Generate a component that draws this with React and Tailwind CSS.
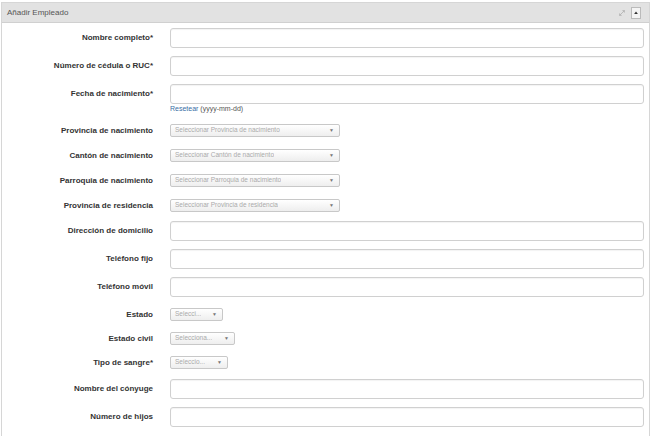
import React from "react";

const font = { fontFamily: '"Liberation Sans", Arial, sans-serif' };

const TextRow = ({ label, mb = "mb-[8px]" }) => (
  <div className={`flex items-center h-[20px] ${mb}`}>
    <label className="w-[151px] text-right text-[8px] font-bold text-[#333]">{label}</label>
    <div className="ml-[17px] flex-1 pr-[5px]">
      <input className="block w-full h-[20px] border border-[#d0d0d0] rounded-[3px] bg-white shadow-[inset_0_1px_1px_rgba(0,0,0,0.05)] outline-none" />
    </div>
  </div>
);

const SelectRow = ({ label, placeholder, width, mb = "mb-[12px]" }) => (
  <div className={`flex items-center h-[13px] ${mb}`}>
    <label className="w-[151px] text-right text-[8px] font-bold text-[#333]">{label}</label>
    <div className="ml-[17px]">
      <div
        className={`${width} h-[13px] flex items-center justify-between border border-[#c8c8c8] rounded-[2px] bg-gradient-to-b from-white to-[#eeeeee] pl-[4px] pr-[5px]`}
      >
        <span className="text-[6.5px] text-[#aaa] truncate leading-none">{placeholder}</span>
        <span className="text-[5px] text-[#777] leading-none">▼</span>
      </div>
    </div>
  </div>
);

export default function App() {
  return (
    <div className="w-[654px] h-[436px] bg-white overflow-hidden" style={font}>
      <div className="mt-[2px] ml-[1px] w-[649px] border border-[#d6d6d6] border-b-0 h-[440px]">
        <div className="h-[20px] bg-[#e2e2e2] border-b border-[#d0d0d0] flex items-center justify-between pl-[5px] pr-[8px]">
          <span className="text-[8px] text-[#555]">Añadir Empleado</span>
          <div className="flex items-center gap-[5px]">
            <svg width="8" height="8" viewBox="0 0 10 10" className="text-[#aaa]">
              <path d="M2 8 L8 2 M5.5 2 H8 V4.5 M2 5.5 V8 H4.5" stroke="currentColor" strokeWidth="0.9" fill="none" />
            </svg>
            <div className="w-[10px] h-[12px] border border-[#bbb] bg-[#f4f4f4] flex items-center justify-center">
              <svg width="4" height="3" viewBox="0 0 5 4">
                <path d="M0 4 L2.5 0.5 L5 4 Z" fill="#333" />
              </svg>
            </div>
          </div>
        </div>
        <div className="pt-[5px]">
          <TextRow label="Nombre completo*" />
          <TextRow label="Número de cédula o RUC*" />
          <div className="flex items-start mb-[10px]">
            <label className="w-[151px] text-right text-[8px] font-bold text-[#333] leading-[20px]">Fecha de nacimiento*</label>
            <div className="ml-[17px] flex-1 pr-[5px]">
              <input className="block w-full h-[20px] border border-[#d0d0d0] rounded-[3px] bg-white shadow-[inset_0_1px_1px_rgba(0,0,0,0.05)] outline-none" />
              <div className="leading-[10px] text-[7px] text-[#555]">
                <span className="text-[#3a6ea5]">Resetear</span> (yyyy-mm-dd)
              </div>
            </div>
          </div>
          <SelectRow label="Provincia de nacimiento" placeholder="Seleccionar Provincia de nacimiento" width="w-[170px]" />
          <SelectRow label="Cantón de nacimiento" placeholder="Seleccionar Cantón de nacimiento" width="w-[170px]" />
          <SelectRow label="Parroquia de nacimiento" placeholder="Seleccionar Parroquia de nacimiento" width="w-[170px]" />
          <SelectRow label="Provincia de residencia" placeholder="Seleccionar Provincia de residencia" width="w-[170px]" mb="mb-[9px]" />
          <TextRow label="Dirección de domicilio" />
          <TextRow label="Teléfono fijo" />
          <TextRow label="Teléfono móvil" mb="mb-[11px]" />
          <SelectRow label="Estado" placeholder="Selecci..." width="w-[53px]" mb="mb-[11px]" />
          <SelectRow label="Estado civil" placeholder="Selecciona..." width="w-[65px]" mb="mb-[11px]" />
          <SelectRow label="Tipo de sangre*" placeholder="Seleccio..." width="w-[58px]" mb="mb-[10px]" />
          <TextRow label="Nombre del cónyuge" />
          <TextRow label="Número de hijos" />
        </div>
      </div>
    </div>
  );
}
